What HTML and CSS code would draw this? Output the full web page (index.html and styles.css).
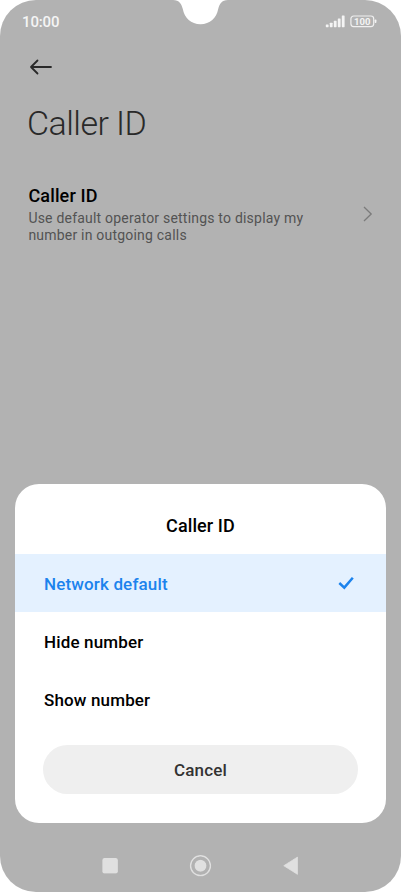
FILE: index.html
```html
<!DOCTYPE html>
<html lang="en">
<head>
<meta charset="utf-8">
<title>Caller ID</title>
<link rel="stylesheet" href="styles.css">
</head>
<body>
<div class="phone">
  <svg class="notch" width="60" height="26" viewBox="0 0 60 26"><path d="M3 0C9.500 0 11.500 4 12.800 9C14.500 18 21 24.200 30.500 24.200S46.500 18 48.200 9C49.500 4 51.500 0 58 0Z" fill="#fff"/></svg>
  <header class="status">
    <span class="time">10:00</span>
    <svg class="indicators" width="52" height="14" viewBox="0 0 52 14">
      <g fill="#f4f4f4"><rect x="0.800" y="9.500" width="2.800" height="2.700" rx=".6"/><rect x="4.800" y="7.700" width="2.800" height="4.500" rx=".6"/><rect x="8.800" y="5.800" width="2.800" height="6.400" rx=".6"/><rect x="12.800" y="3.500" width="2.800" height="8.700" rx=".6"/><rect x="16.800" y="0.500" width="2.800" height="11.700" rx=".6"/><rect x="49.700" y="4.500" width="1.700" height="3.400" rx=".7"/></g>
      <rect x="25.900" y="1" width="22.800" height="10.600" rx="2.800" fill="none" stroke="#f0f0f0" stroke-width="1.200"/>
      <text class="charge" x="37.300" y="9.700" text-anchor="middle">100</text>
    </svg>
  </header>
  <div class="back">
    <svg width="24" height="18" viewBox="0 0 24 18" fill="none" stroke="#292929" stroke-width="1.800" stroke-linecap="round" stroke-linejoin="round"><path d="M2 9H22M8.500 2.500L2 9L8.500 15.500"/></svg>
  </div>
  <h1 class="title">Caller ID</h1>
  <section class="setting">
    <div class="copy">
      <h2 class="name">Caller ID</h2>
      <p class="summary">Use default operator settings to display my<br>number in outgoing calls</p>
    </div>
    <svg width="10" height="16" viewBox="0 0 10 16" fill="none" stroke="#7b7b7b" stroke-width="1.300"><path d="M1 1L8.200 8L1 15"/></svg>
  </section>
  <main class="dialog">
    <h2 class="heading">Caller ID</h2>
    <div class="option selected"><span class="network">Network default</span>
      <svg width="16" height="14" viewBox="0 0 16 14" fill="none" stroke="#1c83ed" stroke-width="2.500"><path d="M1.300 7L6.300 11.600L14.800 1.700"/></svg>
    </div>
    <div class="option"><span>Hide number</span></div>
    <div class="option"><span>Show number</span></div>
    <button class="cancel">Cancel</button>
  </main>
  <nav class="nav">
    <svg width="200" height="24" viewBox="0 0 200 24">
      <g class="keys"><rect x="2.300" y="4" width="15.600" height="15.600" rx="2" fill="#e0e0e0"/><circle cx="100.500" cy="11.700" r="9.900" fill="none" stroke="#e0e0e0" stroke-width="1.500"/><circle cx="100.500" cy="11.700" r="6" fill="#e0e0e0"/><path d="M183.700 11.700L197.500 3V20.400Z" fill="#e0e0e0" stroke="#e0e0e0" stroke-width=".8" stroke-linejoin="round"/></g>
    </svg>
  </nav>
</div>
</body>
</html>
```
FILE: styles.css
```css
* { box-sizing: border-box; }
body { margin: 0; background: #fff; font-family: Roboto, sans-serif; color: #000; }
h1, h2, p { margin: 0; }
svg { display: block; flex: none; }
.phone { position: relative; width: 401px; height: 892px; display: flex; flex-direction: column; overflow: hidden; border-radius: 36px; background: #b2b2b2; }
.notch { position: absolute; left: 170px; top: 0; }
.status { height: 44px; padding: 0 24px 0 22px; display: flex; justify-content: space-between; align-items: center; }
.time { font-size: 15px; font-weight: 500; line-height: 18px; color: #f5f5f5; letter-spacing: -.15px; }
.charge { font-size: 9.5px; font-weight: 700; fill: #f4f4f4; }
.back { height: 46px; padding: 14px 0 0 29px; }
.title { height: 94px; padding: 13px 0 0 27px; font-size: 34px; font-weight: 300; line-height: 40px; letter-spacing: -.55px; color: #292929; }
.setting { height: 60px; padding: 0 28px 0 28.4px; display: flex; align-items: center; justify-content: space-between; }
.name { font-size: 18px; font-weight: 500; line-height: 23px; letter-spacing: .15px; }
.summary { padding-top: 3px; font-size: 14px; line-height: 17px; letter-spacing: .21px; color: #535353; }
.dialog { height: 339px; margin: 240px 15px 0; background: #fff; border-radius: 24px; overflow: hidden; }
.heading { height: 70px; padding-top: 14px; text-align: center; font-size: 18px; font-weight: 500; line-height: 56px; letter-spacing: .1px; }
.option { height: 58px; padding: 0 32px 0 29px; display: flex; align-items: center; justify-content: space-between; font-size: 17px; font-weight: 500; line-height: 24px; letter-spacing: .15px; }
.option span { padding-top: 1px; }
.selected { background: #e4f1ff; color: #1c83ed; }
.cancel { display: block; width: 315px; height: 49px; margin: 17px 0 0 28px; padding: 0; border: 0; border-radius: 25px; background: #efefef; color: #333; font: 500 17px/24px Roboto, sans-serif; letter-spacing: .15px; }
.nav { flex: 1; padding: 31px 0 0 100px; }
.keys { filter: drop-shadow(0 .5px .5px #8888); }
```
